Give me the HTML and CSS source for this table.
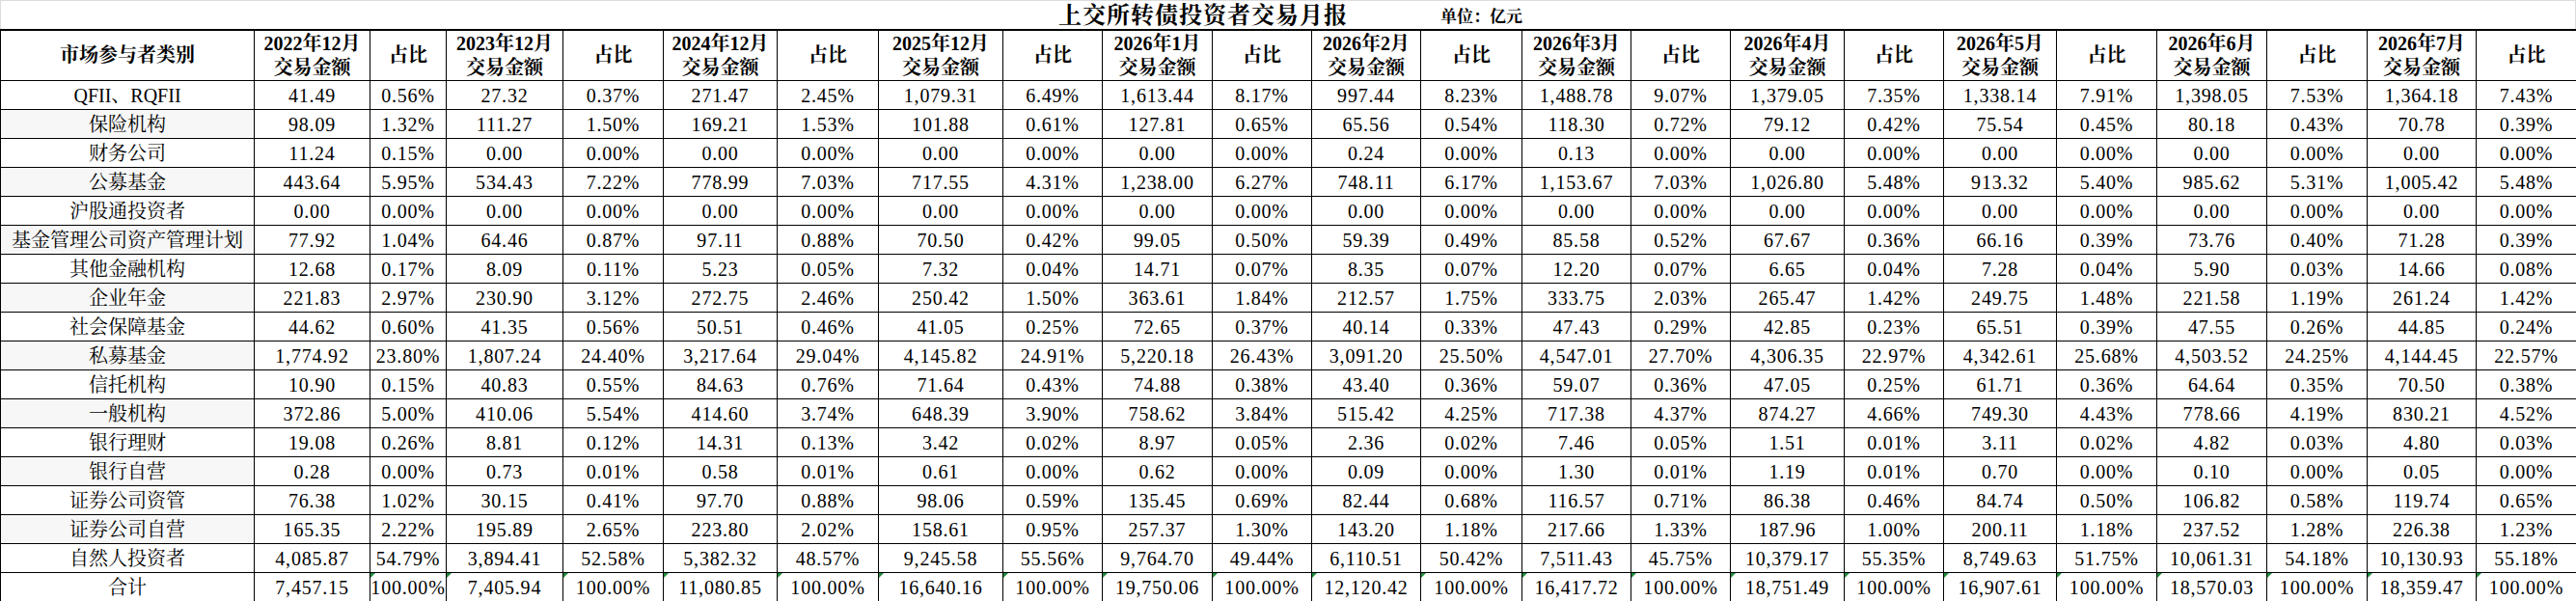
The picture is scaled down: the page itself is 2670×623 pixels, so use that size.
FILE: index.html
```html
<!DOCTYPE html>
<html lang="zh-CN">
<head>
<meta charset="utf-8">
<title>上交所转债投资者交易月报</title>
<link rel="stylesheet" href="styles.css">
</head>
<body>
<div class="sheet">
  <div class="title-bar">
    <span class="title">上交所转债投资者交易月报</span>
    <span class="unit">单位：亿元</span>
  </div>
  <table class="grid">
    <colgroup>
      <col><col><col><col><col><col><col><col><col><col><col><col><col><col><col><col><col><col><col><col><col><col><col>
    </colgroup>
    <thead>
      <tr class="head">
        <th>市场参与者类别</th>
        <th>2022年12月<br>交易金额</th><th>占比</th>
        <th>2023年12月<br>交易金额</th><th>占比</th>
        <th>2024年12月<br>交易金额</th><th>占比</th>
        <th>2025年12月<br>交易金额</th><th>占比</th>
        <th>2026年1月<br>交易金额</th><th>占比</th>
        <th>2026年2月<br>交易金额</th><th>占比</th>
        <th>2026年3月<br>交易金额</th><th>占比</th>
        <th>2026年4月<br>交易金额</th><th>占比</th>
        <th>2026年5月<br>交易金额</th><th>占比</th>
        <th>2026年6月<br>交易金额</th><th>占比</th>
        <th>2026年7月<br>交易金额</th><th>占比</th>
      </tr>
    </thead>
    <tbody>
      <tr><td class="cat">QFII、RQFII</td><td>41.49</td><td>0.56%</td><td>27.32</td><td>0.37%</td><td>271.47</td><td>2.45%</td><td>1,079.31</td><td>6.49%</td><td>1,613.44</td><td>8.17%</td><td>997.44</td><td>8.23%</td><td>1,488.78</td><td>9.07%</td><td>1,379.05</td><td>7.35%</td><td>1,338.14</td><td>7.91%</td><td>1,398.05</td><td>7.53%</td><td>1,364.18</td><td>7.43%</td></tr>
      <tr class="alt"><td class="cat">保险机构</td><td>98.09</td><td>1.32%</td><td>111.27</td><td>1.50%</td><td>169.21</td><td>1.53%</td><td>101.88</td><td>0.61%</td><td>127.81</td><td>0.65%</td><td>65.56</td><td>0.54%</td><td>118.30</td><td>0.72%</td><td>79.12</td><td>0.42%</td><td>75.54</td><td>0.45%</td><td>80.18</td><td>0.43%</td><td>70.78</td><td>0.39%</td></tr>
      <tr><td class="cat">财务公司</td><td>11.24</td><td>0.15%</td><td>0.00</td><td>0.00%</td><td>0.00</td><td>0.00%</td><td>0.00</td><td>0.00%</td><td>0.00</td><td>0.00%</td><td>0.24</td><td>0.00%</td><td>0.13</td><td>0.00%</td><td>0.00</td><td>0.00%</td><td>0.00</td><td>0.00%</td><td>0.00</td><td>0.00%</td><td>0.00</td><td>0.00%</td></tr>
      <tr class="alt"><td class="cat">公募基金</td><td>443.64</td><td>5.95%</td><td>534.43</td><td>7.22%</td><td>778.99</td><td>7.03%</td><td>717.55</td><td>4.31%</td><td>1,238.00</td><td>6.27%</td><td>748.11</td><td>6.17%</td><td>1,153.67</td><td>7.03%</td><td>1,026.80</td><td>5.48%</td><td>913.32</td><td>5.40%</td><td>985.62</td><td>5.31%</td><td>1,005.42</td><td>5.48%</td></tr>
      <tr><td class="cat">沪股通投资者</td><td>0.00</td><td>0.00%</td><td>0.00</td><td>0.00%</td><td>0.00</td><td>0.00%</td><td>0.00</td><td>0.00%</td><td>0.00</td><td>0.00%</td><td>0.00</td><td>0.00%</td><td>0.00</td><td>0.00%</td><td>0.00</td><td>0.00%</td><td>0.00</td><td>0.00%</td><td>0.00</td><td>0.00%</td><td>0.00</td><td>0.00%</td></tr>
      <tr class="alt"><td class="cat">基金管理公司资产管理计划</td><td>77.92</td><td>1.04%</td><td>64.46</td><td>0.87%</td><td>97.11</td><td>0.88%</td><td>70.50</td><td>0.42%</td><td>99.05</td><td>0.50%</td><td>59.39</td><td>0.49%</td><td>85.58</td><td>0.52%</td><td>67.67</td><td>0.36%</td><td>66.16</td><td>0.39%</td><td>73.76</td><td>0.40%</td><td>71.28</td><td>0.39%</td></tr>
      <tr><td class="cat">其他金融机构</td><td>12.68</td><td>0.17%</td><td>8.09</td><td>0.11%</td><td>5.23</td><td>0.05%</td><td>7.32</td><td>0.04%</td><td>14.71</td><td>0.07%</td><td>8.35</td><td>0.07%</td><td>12.20</td><td>0.07%</td><td>6.65</td><td>0.04%</td><td>7.28</td><td>0.04%</td><td>5.90</td><td>0.03%</td><td>14.66</td><td>0.08%</td></tr>
      <tr class="alt"><td class="cat">企业年金</td><td>221.83</td><td>2.97%</td><td>230.90</td><td>3.12%</td><td>272.75</td><td>2.46%</td><td>250.42</td><td>1.50%</td><td>363.61</td><td>1.84%</td><td>212.57</td><td>1.75%</td><td>333.75</td><td>2.03%</td><td>265.47</td><td>1.42%</td><td>249.75</td><td>1.48%</td><td>221.58</td><td>1.19%</td><td>261.24</td><td>1.42%</td></tr>
      <tr><td class="cat">社会保障基金</td><td>44.62</td><td>0.60%</td><td>41.35</td><td>0.56%</td><td>50.51</td><td>0.46%</td><td>41.05</td><td>0.25%</td><td>72.65</td><td>0.37%</td><td>40.14</td><td>0.33%</td><td>47.43</td><td>0.29%</td><td>42.85</td><td>0.23%</td><td>65.51</td><td>0.39%</td><td>47.55</td><td>0.26%</td><td>44.85</td><td>0.24%</td></tr>
      <tr class="alt"><td class="cat">私募基金</td><td>1,774.92</td><td>23.80%</td><td>1,807.24</td><td>24.40%</td><td>3,217.64</td><td>29.04%</td><td>4,145.82</td><td>24.91%</td><td>5,220.18</td><td>26.43%</td><td>3,091.20</td><td>25.50%</td><td>4,547.01</td><td>27.70%</td><td>4,306.35</td><td>22.97%</td><td>4,342.61</td><td>25.68%</td><td>4,503.52</td><td>24.25%</td><td>4,144.45</td><td>22.57%</td></tr>
      <tr><td class="cat">信托机构</td><td>10.90</td><td>0.15%</td><td>40.83</td><td>0.55%</td><td>84.63</td><td>0.76%</td><td>71.64</td><td>0.43%</td><td>74.88</td><td>0.38%</td><td>43.40</td><td>0.36%</td><td>59.07</td><td>0.36%</td><td>47.05</td><td>0.25%</td><td>61.71</td><td>0.36%</td><td>64.64</td><td>0.35%</td><td>70.50</td><td>0.38%</td></tr>
      <tr class="alt"><td class="cat">一般机构</td><td>372.86</td><td>5.00%</td><td>410.06</td><td>5.54%</td><td>414.60</td><td>3.74%</td><td>648.39</td><td>3.90%</td><td>758.62</td><td>3.84%</td><td>515.42</td><td>4.25%</td><td>717.38</td><td>4.37%</td><td>874.27</td><td>4.66%</td><td>749.30</td><td>4.43%</td><td>778.66</td><td>4.19%</td><td>830.21</td><td>4.52%</td></tr>
      <tr><td class="cat">银行理财</td><td>19.08</td><td>0.26%</td><td>8.81</td><td>0.12%</td><td>14.31</td><td>0.13%</td><td>3.42</td><td>0.02%</td><td>8.97</td><td>0.05%</td><td>2.36</td><td>0.02%</td><td>7.46</td><td>0.05%</td><td>1.51</td><td>0.01%</td><td>3.11</td><td>0.02%</td><td>4.82</td><td>0.03%</td><td>4.80</td><td>0.03%</td></tr>
      <tr class="alt"><td class="cat">银行自营</td><td>0.28</td><td>0.00%</td><td>0.73</td><td>0.01%</td><td>0.58</td><td>0.01%</td><td>0.61</td><td>0.00%</td><td>0.62</td><td>0.00%</td><td>0.09</td><td>0.00%</td><td>1.30</td><td>0.01%</td><td>1.19</td><td>0.01%</td><td>0.70</td><td>0.00%</td><td>0.10</td><td>0.00%</td><td>0.05</td><td>0.00%</td></tr>
      <tr><td class="cat">证券公司资管</td><td>76.38</td><td>1.02%</td><td>30.15</td><td>0.41%</td><td>97.70</td><td>0.88%</td><td>98.06</td><td>0.59%</td><td>135.45</td><td>0.69%</td><td>82.44</td><td>0.68%</td><td>116.57</td><td>0.71%</td><td>86.38</td><td>0.46%</td><td>84.74</td><td>0.50%</td><td>106.82</td><td>0.58%</td><td>119.74</td><td>0.65%</td></tr>
      <tr class="alt"><td class="cat">证券公司自营</td><td>165.35</td><td>2.22%</td><td>195.89</td><td>2.65%</td><td>223.80</td><td>2.02%</td><td>158.61</td><td>0.95%</td><td>257.37</td><td>1.30%</td><td>143.20</td><td>1.18%</td><td>217.66</td><td>1.33%</td><td>187.96</td><td>1.00%</td><td>200.11</td><td>1.18%</td><td>237.52</td><td>1.28%</td><td>226.38</td><td>1.23%</td></tr>
      <tr><td class="cat">自然人投资者</td><td>4,085.87</td><td>54.79%</td><td>3,894.41</td><td>52.58%</td><td>5,382.32</td><td>48.57%</td><td>9,245.58</td><td>55.56%</td><td>9,764.70</td><td>49.44%</td><td>6,110.51</td><td>50.42%</td><td>7,511.43</td><td>45.75%</td><td>10,379.17</td><td>55.35%</td><td>8,749.63</td><td>51.75%</td><td>10,061.31</td><td>54.18%</td><td>10,130.93</td><td>55.18%</td></tr>
      <tr class="total"><td class="cat">合计</td><td>7,457.15</td><td class="flag">100.00%</td><td class="flag">7,405.94</td><td class="flag">100.00%</td><td class="flag">11,080.85</td><td class="flag">100.00%</td><td class="flag">16,640.16</td><td class="flag">100.00%</td><td class="flag">19,750.06</td><td class="flag">100.00%</td><td class="flag">12,120.42</td><td class="flag">100.00%</td><td class="flag">16,417.72</td><td class="flag">100.00%</td><td class="flag">18,751.49</td><td class="flag">100.00%</td><td class="flag">16,907.61</td><td class="flag">100.00%</td><td class="flag">18,570.03</td><td class="flag">100.00%</td><td class="flag">18,359.47</td><td class="flag">100.00%</td></tr>
    </tbody>
  </table>
</div>
</body>
</html>
```

FILE: styles.css
```css
html, body {
  margin: 0;
  padding: 0;
  background: #ffffff;
}

.sheet {
  width: 2670px;
  font-family: "Liberation Serif", "Noto Serif CJK SC", "Noto Sans CJK SC", serif;
  color: #000000;
}

.title-bar {
  box-sizing: border-box;
  height: 30px;
  display: flex;
  align-items: flex-end;
  padding-left: 1096px;
  border-top: 1px solid #dcdcdc;
  border-left: 1px solid #dcdcdc;
  border-right: 1px solid #dcdcdc;
}

.title {
  font-size: 24px;
  font-weight: 700;
  line-height: 28px;
  letter-spacing: 1px;
}

.unit {
  margin-left: 96px;
  font-size: 17px;
  font-weight: 700;
  line-height: 24px;
}

.grid {
  width: 2670px;
  table-layout: fixed;
  border-collapse: collapse;
}

.grid col:nth-child(1) { width: 263px; }
.grid col:nth-child(2) { width: 120px; }
.grid col:nth-child(3) { width: 79px; }
.grid col:nth-child(4) { width: 121px; }
.grid col:nth-child(5) { width: 104px; }
.grid col:nth-child(6) { width: 118px; }
.grid col:nth-child(7) { width: 105px; }
.grid col:nth-child(8) { width: 129px; }
.grid col:nth-child(9) { width: 103px; }
.grid col:nth-child(10) { width: 114px; }
.grid col:nth-child(11) { width: 103px; }
.grid col:nth-child(12) { width: 113px; }
.grid col:nth-child(13) { width: 105px; }
.grid col:nth-child(14) { width: 113px; }
.grid col:nth-child(15) { width: 103px; }
.grid col:nth-child(16) { width: 118px; }
.grid col:nth-child(17) { width: 103px; }
.grid col:nth-child(18) { width: 117px; }
.grid col:nth-child(19) { width: 104px; }
.grid col:nth-child(20) { width: 114px; }
.grid col:nth-child(21) { width: 104px; }
.grid col:nth-child(22) { width: 113px; }
.grid col:nth-child(23) { width: 104px; }

.grid th,
.grid td {
  border: 1px solid #000000;
  padding: 0;
  text-align: center;
  vertical-align: middle;
  white-space: nowrap;
  overflow: hidden;
}

.head th {
  height: 51px;
  border-top: 2px solid #000000;
  font-size: 20px;
  font-weight: 700;
  line-height: 25px;
}

.grid tbody tr {
  height: 30px;
}

.grid td {
  font-size: 20px;
  line-height: 28px;
  letter-spacing: 0.8px;
}

.grid td.cat {
  letter-spacing: 0;
  font-size: 20px;
}

.grid tr.alt td.cat {
  background: #f7f7f7;
}

.grid td.flag {
  position: relative;
}

.grid td.flag::before {
  content: "";
  position: absolute;
  left: 0;
  top: 0;
  width: 0;
  height: 0;
  border-top: 5px solid #1f8a3c;
  border-right: 5px solid transparent;
}
```
